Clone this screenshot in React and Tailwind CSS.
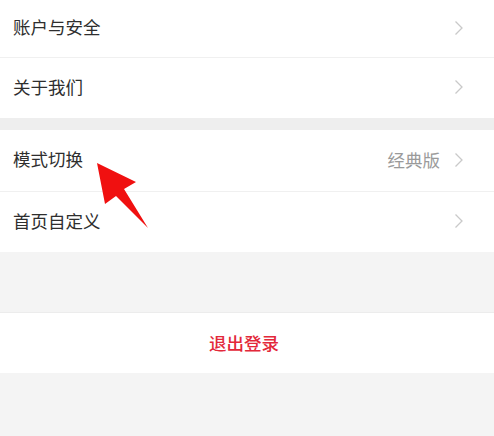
import React from 'react';

const font = { fontFamily: '"Noto Sans CJK SC", "Noto Sans", sans-serif' };

function Chevron() {
  return (
    <svg width="10" height="16" viewBox="0 0 10 16" className="shrink-0">
      <polyline points="1.5,1.5 8,8 1.5,14.5" fill="none" stroke="#c9c9c9" strokeWidth="1.3" />
    </svg>
  );
}

function Row({ label, value, height, border }) {
  return (
    <div
      className={`flex items-center justify-between bg-white pl-[13px] pr-[30px] ${height} ${border ? 'border-b border-[#f0f0f0]' : ''}`}
    >
      <span className="text-[17.5px] text-[#2e2e2e] leading-none mb-[3px]">{label}</span>
      <div className="flex items-center gap-[14px] mb-[2px]">
        {value && <span className="text-[17.5px] text-[#9a9a9a] leading-none">{value}</span>}
        <Chevron />
      </div>
    </div>
  );
}

export default function App() {
  return (
    <div className="relative w-[494px] h-[436px] bg-[#f4f4f4] overflow-hidden" style={font}>
      <Row label="账户与安全" height="h-[58px]" border />
      <Row label="关于我们" height="h-[60px]" />
      <div className="h-[12px] bg-[#eeeeee]" />
      <Row label="模式切换" value="经典版" height="h-[62px]" border />
      <Row label="首页自定义" height="h-[60px]" />
      <div className="h-[61px] border-b border-[#ececec]" />
      <div className="h-[60px] bg-white flex items-center justify-center">
        <span className="text-[17.5px] font-medium text-[#e3283a] leading-none mr-[6px]">退出登录</span>
      </div>

      {/* red annotation arrow */}
      <svg className="absolute left-0 top-0 pointer-events-none" width="494" height="436">
        <polygon
          points="97,163 136,182 124,189 148,228 116,196 105,204"
          fill="#f01010"
        />
      </svg>
    </div>
  );
}
